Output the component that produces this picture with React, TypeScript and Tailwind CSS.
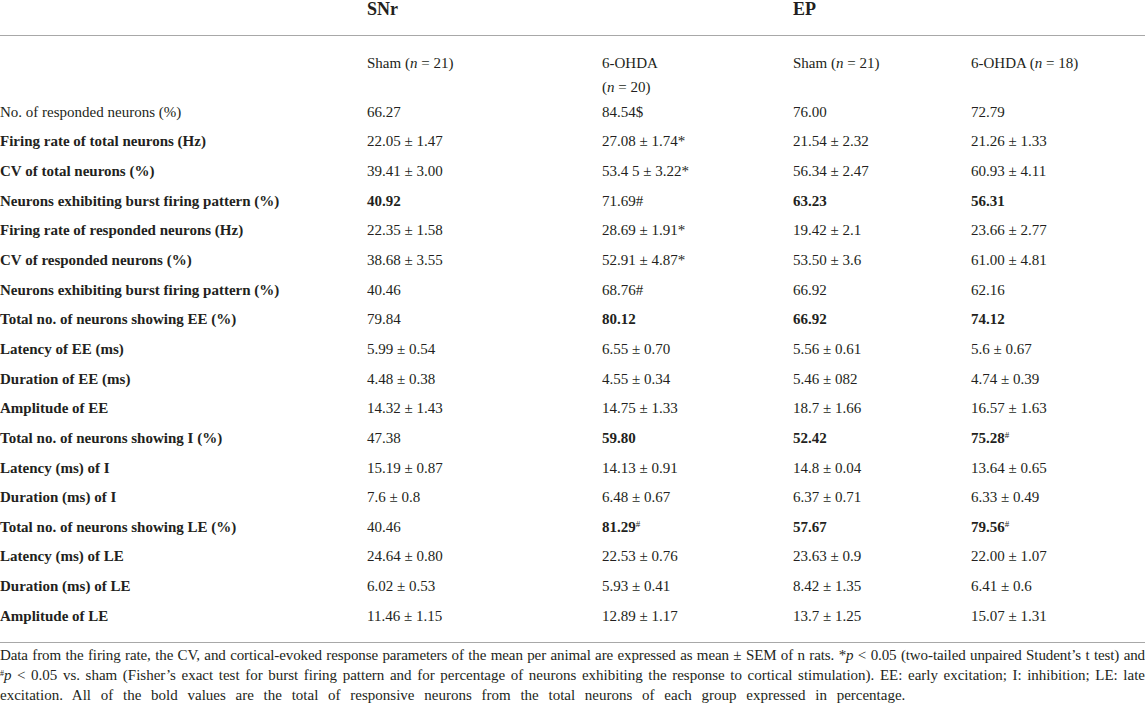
const rows: { label: string; vals: [string, string, string, string]; bold?: boolean[]; sup?: (string | null)[] }[] = [
  { label: "No. of responded neurons (%)", vals: ["66.27", "84.54$", "76.00", "72.79"] },
  { label: "Firing rate of total neurons (Hz)", vals: ["22.05 ± 1.47", "27.08 ± 1.74*", "21.54 ± 2.32", "21.26 ± 1.33"] },
  { label: "CV of total neurons (%)", vals: ["39.41 ± 3.00", "53.4 5 ± 3.22*", "56.34 ± 2.47", "60.93 ± 4.11"] },
  { label: "Neurons exhibiting burst firing pattern (%)", vals: ["40.92", "71.69#", "63.23", "56.31"], bold: [true, false, true, true] },
  { label: "Firing rate of responded neurons (Hz)", vals: ["22.35 ± 1.58", "28.69 ± 1.91*", "19.42 ± 2.1", "23.66 ± 2.77"] },
  { label: "CV of responded neurons (%)", vals: ["38.68 ± 3.55", "52.91 ± 4.87*", "53.50 ± 3.6", "61.00 ± 4.81"] },
  { label: "Neurons exhibiting burst firing pattern (%)", vals: ["40.46", "68.76#", "66.92", "62.16"] },
  { label: "Total no. of neurons showing EE (%)", vals: ["79.84", "80.12", "66.92", "74.12"], bold: [false, true, true, true] },
  { label: "Latency of EE (ms)", vals: ["5.99 ± 0.54", "6.55 ± 0.70", "5.56 ± 0.61", "5.6 ± 0.67"] },
  { label: "Duration of EE (ms)", vals: ["4.48 ± 0.38", "4.55 ± 0.34", "5.46 ± 082", "4.74 ± 0.39"] },
  { label: "Amplitude of EE", vals: ["14.32 ± 1.43", "14.75 ± 1.33", "18.7 ± 1.66", "16.57 ± 1.63"] },
  { label: "Total no. of neurons showing I (%)", vals: ["47.38", "59.80", "52.42", "75.28"], bold: [false, true, true, true], sup: [null, null, null, "#"] },
  { label: "Latency (ms) of I", vals: ["15.19 ± 0.87", "14.13 ± 0.91", "14.8 ± 0.04", "13.64 ± 0.65"] },
  { label: "Duration (ms) of I", vals: ["7.6 ± 0.8", "6.48 ± 0.67", "6.37 ± 0.71", "6.33 ± 0.49"] },
  { label: "Total no. of neurons showing LE (%)", vals: ["40.46", "81.29", "57.67", "79.56"], bold: [false, true, true, true], sup: [null, "#", null, "#"] },
  { label: "Latency (ms) of LE", vals: ["24.64 ± 0.80", "22.53 ± 0.76", "23.63 ± 0.9", "22.00 ± 1.07"] },
  { label: "Duration (ms) of LE", vals: ["6.02 ± 0.53", "5.93 ± 0.41", "8.42 ± 1.35", "6.41 ± 0.6"] },
  { label: "Amplitude of LE", vals: ["11.46 ± 1.15", "12.89 ± 1.17", "13.7 ± 1.25", "15.07 ± 1.31"] },
];

function N({ v }: { v: string }) {
  return (
    <span>
      (<i>n</i> = {v})
    </span>
  );
}

export default function App() {
  return (
    <div className="w-[1145px] bg-white text-[#231f20] font-['Liberation_Serif',serif] text-[15px]">
      {/* group headers */}
      <div className="grid grid-cols-[367px_426px_1fr] h-[36px] border-b border-[#a8a8a8] text-[18px] font-bold leading-[18px]">
        <div />
        <div>SNr</div>
        <div>EP</div>
      </div>

      {/* sub headers */}
      <div className="grid grid-cols-[367px_235px_191px_178px_1fr] h-[61px] pt-[15px] leading-[24px]">
        <div />
        <div>
          Sham <N v="21" />
        </div>
        <div>
          6-OHDA
          <br />
          <N v="20" />
        </div>
        <div>
          Sham <N v="21" />
        </div>
        <div>
          6-OHDA <N v="18" />
        </div>
      </div>

      {/* body */}
      <div className="pb-[11px] border-b border-[#a8a8a8]">
        {rows.map((r, i) => (
          <div key={i} className="grid grid-cols-[367px_235px_191px_178px_1fr] h-[29.65px] items-center leading-[20px]">
            <div className={i === 0 ? "" : "font-bold"}>{r.label}</div>
            {r.vals.map((v, j) => (
              <div key={j} className={r.bold?.[j] ? "font-bold" : ""}>
                {v}
                {r.sup?.[j] && <sup className="text-[9px] font-normal">{r.sup[j]}</sup>}
              </div>
            ))}
          </div>
        ))}
      </div>

      {/* footnote */}
      <div className="pt-[2px] text-[15px] leading-[20px]">
        <div className="overflow-hidden whitespace-nowrap text-justify [text-align-last:justify] tracking-[-0.1px]">
          Data from the firing rate, the CV, and cortical-evoked response parameters of the mean per animal are expressed as mean ± SEM of n rats. *<i>p</i> &lt; 0.05 (two-tailed unpaired Student’s t test) and
        </div>
        <div className="text-justify [text-align-last:justify]">
          <sup className="text-[8px]">#</sup>
          <i>p</i> &lt; 0.05 vs. sham (Fisher’s exact test for burst firing pattern and for percentage of neurons exhibiting the response to cortical stimulation). EE: early excitation; I: inhibition; LE: late
        </div>
        <div className="[word-spacing:6px]">
          excitation. All of the bold values are the total of responsive neurons from the total neurons of each group expressed in percentage.
        </div>
      </div>
    </div>
  );
}
